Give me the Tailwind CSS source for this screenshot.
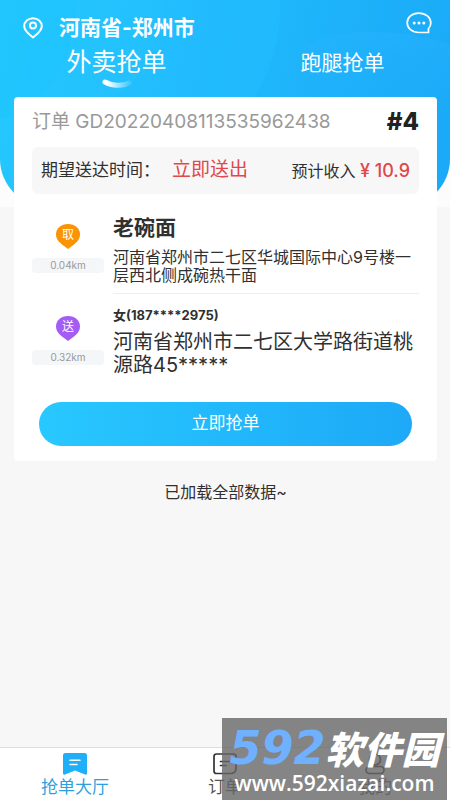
<!DOCTYPE html>
<html lang="zh-CN">
<head>
<meta charset="utf-8">
<meta name="viewport" content="width=device-width, initial-scale=1">
<title>抢单大厅</title>
<script src="https://cdn.jsdelivr.net/npm/@tailwindcss/browser@4"></script>
</head>
<body class="relative flex min-h-screen flex-col overflow-x-hidden bg-[#f7f7f7] font-['Inter','Noto_Sans_CJK_SC',sans-serif] text-[#303030]">
  <div class="absolute inset-x-0 top-0 h-[207px] bg-[#fcfcfc]">
    <div class="h-full overflow-hidden rounded-b-[48px] bg-linear-100 from-[#25c8ff] to-[#1ba9f8]">
      <svg class="h-full w-full" viewBox="0 0 450 207" preserveAspectRatio="none" aria-hidden="true">
        <defs>
          <linearGradient id="disc" x1="0" x2="1" y1="0" y2="0"><stop offset="0" stop-color="#2bd0ff" stop-opacity="0"/><stop offset="1" stop-color="#2bc8ff" stop-opacity=".25"/></linearGradient>
          <linearGradient id="hill" x1="0" x2="0" y1="0" y2="1"><stop offset="0" stop-color="#2cb4ff" stop-opacity=".35"/><stop offset="1" stop-color="#1ba9f8" stop-opacity="0"/></linearGradient>
        </defs>
        <circle cx="122" cy="10" r="158" fill="url(#disc)"/>
        <path d="M0 0H76C78 53 47 109 0 119Z" fill="#1bc4ff" fill-opacity=".35"/>
        <path d="M162 0C164 42 146 76 115 97H255C273 66 281 32 279 0Z" fill="#20b9ff" fill-opacity=".25"/>
        <path d="M285 70C300 42 330 32 370 32C410 32 438 40 450 45V140H270Z" fill="url(#hill)"/>
      </svg>
    </div>
  </div>

  <header class="relative text-white">
    <div class="flex h-[44px] items-end justify-between pr-[18px] pl-[23px]">
      <div class="flex items-center gap-[16px]">
        <svg class="h-[22px] w-[20px]" viewBox="0 0 20 22" fill="none" stroke="currentColor" stroke-width="2" stroke-linejoin="round" aria-hidden="true"><path d="M10 20.500C7 18 1.200 14 1.200 9.200a8.800 8 0 0 1 17.600 0C18.800 14 13 18 10 20.500Z"/><circle cx="10" cy="8.500" r="3"/></svg>
        <h1 class="text-[21px] leading-[32px] font-bold">河南省-郑州市</h1>
      </div>
      <button type="button" aria-label="消息" class="mb-[10px]"><svg class="h-[22px] w-[26px]" viewBox="0 0 26 22" fill="none" aria-hidden="true"><path d="M12.800 1.200C6 1.200 1.200 5.300 1.200 10.800S6 20.500 12.800 20.500H22.500V16.500C24 15 24.800 13 24.800 10.800C24.800 5.300 19.600 1.200 12.800 1.200Z" stroke="currentColor" stroke-width="1.700" stroke-linejoin="round"/><g fill="currentColor"><circle cx="8.200" cy="11" r="1.500"/><circle cx="13" cy="11" r="1.500"/><circle cx="17.800" cy="11" r="1.500"/></g></svg></button>
    </div>
    <nav class="grid h-[53px] grid-cols-2">
      <a href="#takeout" class="flex flex-col items-center pl-[8px] text-[25px] leading-[37px]">外卖抢单
        <svg class="-mt-[2px] h-[10px] w-[30px]" viewBox="0 0 30 10" aria-hidden="true"><defs><linearGradient id="smile"><stop offset=".1" stop-color="#fff"/><stop offset="1" stop-color="#fff" stop-opacity=".15"/></linearGradient></defs><path d="M3 3C10 7 20 7.500 27 4" fill="none" stroke="url(#smile)" stroke-width="5" stroke-linecap="round"/></svg>
      </a>
      <a href="#errand" class="pl-[10px] text-center text-[21px] leading-[37px]">跑腿抢单</a>
    </nav>
  </header>

  <main class="relative flex-1 pr-[13px] pl-[14px]">
    <article class="rounded-[4px] bg-white px-[18px] pb-[15px]">
      <div class="flex h-[50px] items-center justify-between">
        <p class="text-[19px] text-[#999]">订单 GD20220408113535962438</p>
        <strong class="text-[24px] font-extrabold text-[#222]">#4</strong>
      </div>
      <div class="flex h-[47px] items-center justify-between rounded-[6px] bg-[#f7f7f7] px-[9px] whitespace-nowrap">
        <p class="text-[17px]">期望送达时间：<span class="pl-[12px] text-[19px] text-[#e0484b]">立即送出</span></p>
        <p class="text-[16px]">预计收入 <span class="text-[18px] font-medium text-[#e0484b]">¥ 10.9</span></p>
      </div>

      <section class="flex gap-[9px] pt-[22px]">
        <div class="flex w-[72px] shrink-0 flex-col items-center pt-[8px]">
          <div class="relative h-[25px] w-[24px]">
            <svg class="h-full w-full" viewBox="0 0 24 25" aria-hidden="true"><path d="M12 0C5 0 0 4.500 0 10.500C0 15 3 18 6 20.500L12 25L18 20.500C21 18 24 15 24 10.500C24 4.500 19 0 12 0Z" fill="#fa9405"/></svg>
            <span class="absolute inset-x-0 top-0 text-center text-[12px] leading-[22px] text-white">取</span>
          </div>
          <span class="mt-[9px] h-[15px] w-full rounded-[4px] bg-[#f5f6f8] text-center text-[10px] leading-[15px] text-[#999]">0.04km</span>
        </div>
        <div class="min-w-0 flex-1 border-b border-[#eee] pb-[9px]">
          <h2 class="text-[21px] leading-[24px] font-bold">老碗面</h2>
          <p class="mt-[8px] text-[16px] leading-[18px]">河南省郑州市二七区华城国际中心9号楼一层西北侧成碗热干面</p>
        </div>
      </section>

      <section class="flex gap-[9px] pt-[13px]">
        <div class="flex w-[72px] shrink-0 flex-col items-center pt-[9px]">
          <div class="relative h-[25px] w-[24px]">
            <svg class="h-full w-full" viewBox="0 0 24 25" aria-hidden="true"><path d="M12 0C5 0 0 4.500 0 10.500C0 15 3 18 6 20.500L12 25L18 20.500C21 18 24 15 24 10.500C24 4.500 19 0 12 0Z" fill="#a45cf5"/></svg>
            <span class="absolute inset-x-0 top-0 text-center text-[12px] leading-[22px] text-white">送</span>
          </div>
          <span class="mt-[9px] h-[15px] w-full rounded-[4px] bg-[#f5f6f8] text-center text-[10px] leading-[15px] text-[#999]">0.32km</span>
        </div>
        <div class="min-w-0 flex-1">
          <h2 class="text-[13px] leading-[16px] font-bold">女(187****2975)</h2>
          <p class="mt-[8px] text-[20px] leading-[23px]">河南省郑州市二七区大学路街道桃源路45*****</p>
        </div>
      </section>

      <div class="px-[7px] pt-[25px]">
        <button type="button" class="h-[44px] w-full rounded-full bg-linear-to-r from-[#28c8ff] to-[#1da9f7] text-[17px] text-white">立即抢单</button>
      </div>
    </article>
    <p class="pt-[19px] text-center text-[16px] leading-[24px]">已加载全部数据~</p>
  </main>

  <footer class="relative h-[53px] border-t border-[#ddd] bg-white">
    <nav class="grid grid-cols-3 pt-[5px] text-[17px] leading-[25px] text-[#555]">
      <a href="#hall" class="flex flex-col items-center text-[#2f9fdc]">
        <svg class="h-[22px] w-[24px]" viewBox="0 0 24 22" aria-hidden="true"><path d="M2.500 0H21.500Q24 0 24 2.500V20.500Q24 22 22 21.500L12 17.500L2 21.500Q0 22 0 20.500V2.500Q0 0 2.500 0Z" fill="#1db0f8"/><path d="M7 7.200H17M7 11.500H14" stroke="#fff" stroke-width="1.500" stroke-linecap="round"/></svg>
        抢单大厅</a>
      <a href="#orders" class="flex flex-col items-center">
        <svg class="h-[22px] w-[24px]" viewBox="0 0 24 22" fill="none" stroke="#333" stroke-width="1.700" stroke-linecap="round" aria-hidden="true"><path d="M3.500 1H20.500Q23 1 23 3.500V15Q23 20.500 17.500 20.500H3.500Q1 20.500 1 18V3.500Q1 1 3.500 1ZM7.500 8.500H16.500M7.500 12.500H13"/></svg>
        订单</a>
      <a href="#me" class="flex flex-col items-center">
        <svg class="h-[22px] w-[24px]" viewBox="0 0 24 22" fill="none" stroke="#333" stroke-width="1.700" aria-hidden="true"><circle cx="12" cy="6.500" r="5.500"/><rect x="3" y="13.500" width="18" height="7" rx="3.500"/></svg>
        我的</a>
    </nav>
    <div class="absolute right-[3px] bottom-0 flex h-[82px] w-[225px] flex-col items-center overflow-hidden bg-[#666]/80 pt-[8px] text-white">
      <p class="flex items-center leading-[44px] whitespace-nowrap italic">
        <span class="font-['DejaVu_Sans',sans-serif] text-[46px] font-bold text-[#6fb0ff]">592</span>
        <span class="font-['Noto_Sans_CJK_SC',sans-serif] text-[38px] font-black">软件园</span>
      </p>
      <p class="font-['Open_Sans',sans-serif] text-[21px] leading-[26px] font-semibold">www.592xiazai.com</p>
    </div>
  </footer>
</body>
</html>
